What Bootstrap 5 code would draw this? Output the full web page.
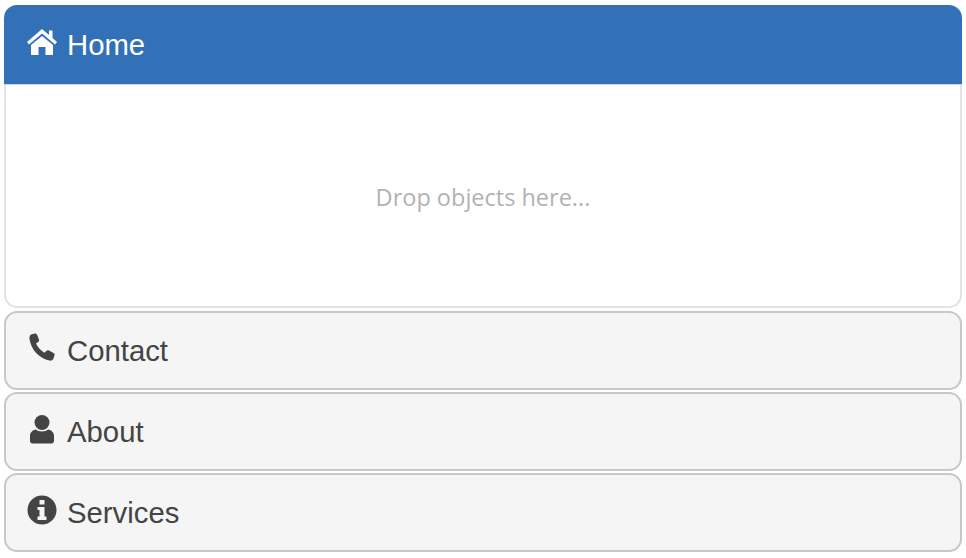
<!DOCTYPE html>
<html lang="en">
<head>
    <meta charset="UTF-8">
    <meta name="viewport" content="width=device-width, initial-scale=1.0">
    <title>Panels</title>
    <link rel="stylesheet" href="https://cdn.jsdelivr.net/npm/bootstrap@5.3.3/dist/css/bootstrap.min.css">
    <style>
        body { background: #fff; }
        .panel-stack { padding: 5px 4px 0; gap: 2px; }
        .panel-box { border: 2px solid #c8c8c8; border-radius: 13px; background: #f5f5f5; color: #444; height: 79px; font: 29.3px "Liberation Sans", Arial, sans-serif; padding: 0 0 0 21px; }
        .panel-box.is-open { background: #3270b7; color: #fff; border: 0; border-bottom: 1px solid #cfd4d9; border-radius: 13px 13px 0 0; height: 80px; padding: 1px 0 0 23px; }
        .panel-box svg { width: 30px; height: 30px; margin-right: 10px; margin-top: -5px; fill: currentColor; flex: none; }
        .panel-box.is-open svg { margin-top: -7px; }
        .panel-drop { height: 223px; margin-top: -2px; margin-bottom: 1px; padding-top: 3px; border: 2px solid #e3e3e3; border-top: 0; border-radius: 0 0 13px 13px; color: #b2b2b2; font: 23.5px "Open Sans", sans-serif; }
    </style>
</head>
<body>

<div class="d-flex flex-column panel-stack">
    <div class="panel-box is-open d-flex align-items-center">
        <svg viewBox="0 0 30 30"><path d="M15 2 L22 8 V3.500 H25.500 V11 L30 15 L28 17.500 L15 6.500 L2 17.500 L0 15 Z"/><path d="M15 9 L26 18 V28 H18.500 V20 H11.500 V28 H4 V18 Z"/></svg>
        <span>Home</span>
    </div>
    <div class="panel-drop d-flex align-items-center justify-content-center">Drop objects here...</div>
    <div class="panel-box d-flex align-items-center">
        <svg viewBox="0 0 30 30"><path d="M4 1.500 L8 0.500 C9 0.500 9.800 1 10.200 2 L12 6.500 C12.300 7.500 12 8.300 11.200 8.900 L9 10.500 C10.500 14 13.500 17.500 17.500 19.800 L19.500 17.800 C20.200 17.100 21 17 22 17.500 L26.500 20 C27.500 20.600 27.800 21.300 27.500 22.300 L26.500 25.500 C26 27 24.500 28 22.500 27.500 C12 25.500 4 16.500 2.500 6 C2.200 3.800 2.800 2.200 4 1.500 Z"/></svg>
        <span>Contact</span>
    </div>
    <div class="panel-box d-flex align-items-center">
        <svg viewBox="0 0 30 30"><circle cx="15" cy="8.500" r="7.500"/><path d="M9 15.500 C11 18 19 18 21 15.500 C24.500 16 27 18.500 27 22 V27 C27 28.500 26 29.500 24.500 29.500 H5.500 C4 29.500 3 28.500 3 27 V22 C3 18.500 5.500 16 9 15.500 Z"/></svg>
        <span>About</span>
    </div>
    <div class="panel-box d-flex align-items-center">
        <svg viewBox="0 0 30 30"><path fill-rule="evenodd" d="M15 0.500 A14.500 14.500 0 1 1 15 29.500 A14.500 14.500 0 1 1 15 0.500 Z M12.500 5 V9.500 H17.500 V5 Z M10.500 12 V15 H12.500 V21.500 H10.500 V25 H19.500 V21.500 H17.500 V12 Z"/></svg>
        <span>Services</span>
    </div>
</div>

<script src="https://cdn.jsdelivr.net/npm/bootstrap@5.3.3/dist/js/bootstrap.bundle.min.js"></script>
</body>
</html>
